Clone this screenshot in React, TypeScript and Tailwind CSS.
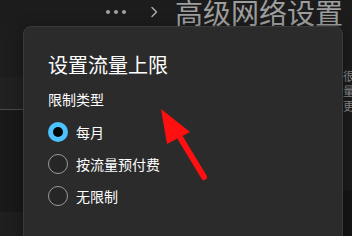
import React from "react";

const font = { fontFamily: '"Noto Sans CJK SC", "Noto Sans", sans-serif' };

function Radio({ checked, label }: { checked?: boolean; label: string }) {
  return (
    <div className="flex h-8 items-center gap-2">
      {checked ? (
        <div className="flex h-5 w-5 items-center justify-center rounded-full bg-[#4cc2ff]">
          <div className="h-[10px] w-[10px] rounded-full bg-[#050505]" />
        </div>
      ) : (
        <div className="h-5 w-5 rounded-full border border-[#9a9a9a] bg-[#262626]" />
      )}
      <span className="text-[14px] leading-5 text-white">{label}</span>
    </div>
  );
}

export default function App() {
  return (
    <div
      className="relative flex h-[236px] w-[352px] flex-col overflow-hidden bg-[#1c1c1c]"
      style={font}
    >
      {/* header breadcrumb */}
      <div className="flex h-[26px] shrink-0 items-start pl-[106px]">
        <div className="flex h-6 items-center gap-1">
          <span className="h-1 w-1 rounded-full bg-[#a3a3a3]" />
          <span className="h-1 w-1 rounded-full bg-[#a3a3a3]" />
          <span className="h-1 w-1 rounded-full bg-[#a3a3a3]" />
        </div>
        <div className="ml-[24px] flex h-6 items-center">
          <svg width="8" height="12" viewBox="0 0 8 12" fill="none">
            <path d="M2 1.5 L6.5 6 L2 10.5" stroke="#b0b0b0" strokeWidth="1.4" strokeLinecap="round" strokeLinejoin="round" />
          </svg>
        </div>
        <span className="ml-[17px] whitespace-nowrap text-[28px] leading-[24px] text-[#9e9e9e]">
          高级网络设置
        </span>
      </div>

      {/* body */}
      <div className="flex flex-1">
        <div className="flex w-[40px] flex-col">
          <div className="h-[51px] bg-[#1d1d1d]" />
          <div className="h-[33px] border-b border-[#4a4a4a] bg-[#212121]" />
          <div className="h-[102px] bg-[#19191a]" />
          <div className="flex-1 bg-[#1f1f1f]" />
        </div>
        <div className="flex-1" />
        <div className="flex w-[20px] flex-col">
          <div className="h-[164px] overflow-hidden bg-[#1c1c1c] pl-[11px] pt-[44px]">
            <div className="flex flex-col gap-[3px] whitespace-nowrap text-[12px] leading-[12px] text-[#8a8a8a]">
              <div>很</div>
              <div>量</div>
              <div>更</div>
            </div>
          </div>
          <div className="flex-1 bg-[#161616]" />
        </div>
      </div>

      {/* dialog */}
      <div className="absolute left-[23px] top-[26px] h-[232px] w-[320px] rounded-lg border border-[#3a3a3a] bg-[#2b2b2b] px-6 pt-6 shadow-[0_4px_16px_rgba(0,0,0,0.4)]">
        <div className="text-[20px] leading-[28px] text-white">设置流量上限</div>
        <div className="mt-[10px] text-[14px] leading-5 text-white">限制类型</div>
        <div className="mt-[7px] flex flex-col">
          <Radio checked label="每月" />
          <Radio label="按流量预付费" />
          <Radio label="无限制" />
        </div>
      </div>

      {/* annotation arrow */}
      <svg
        className="pointer-events-none absolute left-0 top-0"
        width="352"
        height="236"
        viewBox="0 0 352 236"
      >
        <line x1="181" y1="139" x2="204" y2="177" stroke="#ff0f0f" strokeWidth="6" strokeLinecap="round" />
        <polygon points="161,109 167,144 190,132" fill="#ff0f0f" />
      </svg>
    </div>
  );
}
